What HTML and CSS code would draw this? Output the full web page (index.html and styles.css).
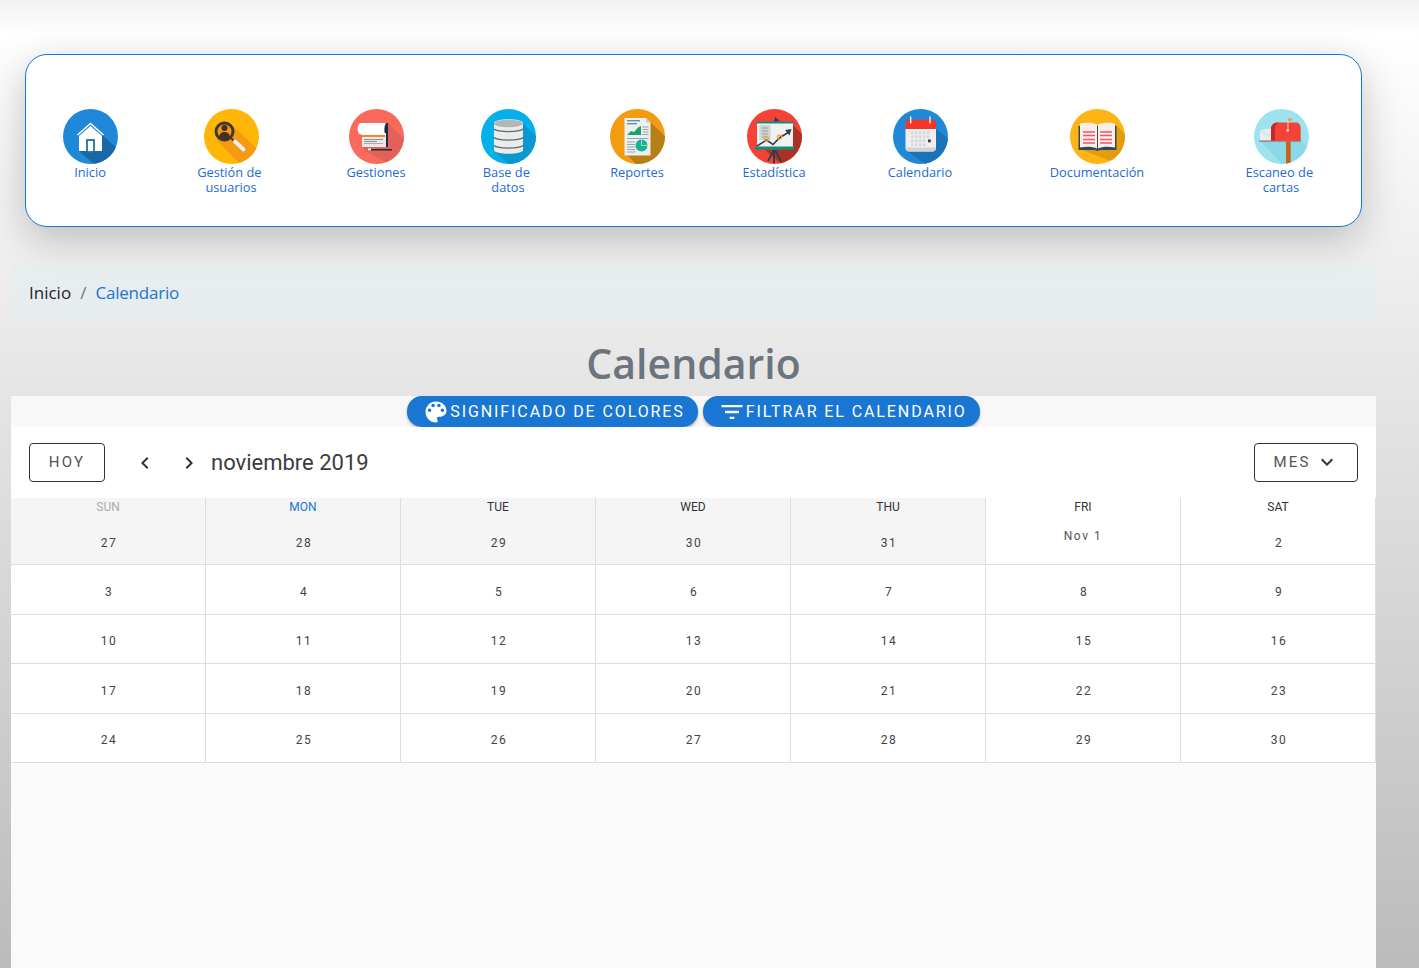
FILE: index.html
```html
<!DOCTYPE html>
<html lang="es">
  <head>
    <meta charset="UTF-8" />
    <title>Calendario</title>
    <link rel="stylesheet" href="styles.css">
  </head>
  <body>
    <nav class="nav-card">
      <a class="nav-item" href="#">
        <svg class="nav-icon" viewBox="0 0 55 55">
          <rect width="55" height="55" fill="#1f88d8"/>
          <polygon points="39,26 55,40 55,55 31,55 16,42 39,42" fill="#1a67a3"/>
          <polyline points="14.5,26 27.5,14.5 40.5,26" fill="none" stroke="#fff" stroke-width="1.6"/>
          <polygon points="16,27 27.5,17 39,27 39,42 16,42" fill="#fff"/>
          <rect x="24" y="31" width="7" height="12" fill="#fff" stroke="#1f6fae" stroke-width="1.8"/>
        </svg>
        <span>Inicio</span>
      </a>
      <a class="nav-item" href="#">
        <svg class="nav-icon" viewBox="0 0 55 55">
          <rect width="55" height="55" fill="#ffb606"/>
          <polygon points="27,15 55,42 55,55 36,55 13,31" fill="#f59b0f"/>
          <circle cx="20.5" cy="22.5" r="8.5" fill="#f59a14" stroke="#3c3a36" stroke-width="3"/>
          <circle cx="20.5" cy="19" r="3" fill="#4a2d1c"/>
          <path d="M15 28.5c.5-4 2.5-5.5 5.500-5.500s5 1.500 5.500 5.500c-3 2-8 2-11 0z" fill="#4a2d1c"/>
          <line x1="27" y1="29" x2="30" y2="32" stroke="#3c3a36" stroke-width="2"/>
          <line x1="31" y1="32.500" x2="39.500" y2="40.500" stroke="#eceff1" stroke-width="3.800" stroke-linecap="round"/>
        </svg>
        <span>Gestión de&nbsp;<br>usuarios</span>
      </a>
      <a class="nav-item" href="#">
        <svg class="nav-icon" viewBox="0 0 55 55">
          <rect width="55" height="55" fill="#fa6a5c"/>
          <polygon points="39,14 55,30 55,55 40,55 15,41 13,36" fill="#e2625a"/>
          <path d="M35 14h4v24h-4c-1-1-1-3 0-4z" fill="#1f2c3f"/>
          <rect x="13" y="24" width="24" height="14" fill="#e8e8e6"/>
          <rect x="13" y="26" width="23" height="2" fill="#ee8a3a"/>
          <rect x="15" y="30" width="19" height="1" fill="#8d939b"/>
          <rect x="15" y="32" width="13" height="1" fill="#8d939b"/>
          <rect x="15" y="34" width="19" height="1" fill="#a8adb3"/>
          <path d="M12 14h25c-2 3-2 8-1 11.500H12c-4.500 0-4.500-11.500 0-11.500z" fill="#fff"/>
          <rect x="19" y="40" width="24" height="1.500" fill="#1f2c3f"/>
          <rect x="19" y="39.500" width="3" height="2" fill="#f4f4f4"/>
        </svg>
        <span>Gestiones</span>
      </a>
      <a class="nav-item" href="#">
        <svg class="nav-icon" viewBox="0 0 55 55">
          <rect width="55" height="55" fill="#04b0ea"/>
          <polygon points="40,12 55,27 55,55 28,55 13,42" fill="#0b97cf"/>
          <path d="M13 14c0-5 29-5 29 0v27c0 5-29 5-29 0z" fill="#e9ece9"/>
          <ellipse cx="27.500" cy="14.500" rx="14.500" ry="3.800" fill="#b3b7b8"/>
          <path d="M13 20c4 3.500 25 3.500 29 0M13 28.500c4 3.500 25 3.500 29 0M13 36.500c4 3.500 25 3.500 29 0" fill="none" stroke="#5d6877" stroke-width="1.200"/>
        </svg>
        <span>Base de&nbsp;<br>datos</span>
      </a>
      <a class="nav-item" href="#">
        <svg class="nav-icon" viewBox="0 0 55 55">
          <rect width="55" height="55" fill="#f39c12"/>
          <polygon points="36,9 55,27 55,55 26,55 14,43" fill="#b97f17"/>
          <polygon points="14.500,9 36,9 40.500,13.500 40.500,46.500 14.500,46.500" fill="#ecf0f1"/>
          <polygon points="36,9 40.500,13.500 36,13.500" fill="#c5cccf"/>
          <rect x="17" y="11" width="13" height="1.400" fill="#5b93ad"/>
          <rect x="17" y="14" width="10" height="1.400" fill="#5b93ad"/>
          <polygon points="17,26 21,22 24,23 28,18.500 31,17 31,26" fill="#21a06f"/>
          <path d="M32.500 18h6M32.500 20.500h6M32.500 23h6M32.500 25.500h6M17 29.500h21.500" stroke="#96a6ad" stroke-width="1"/>
          <path d="M17 33h8M17 35.500h8M17 38h8M17 40.500h8M17 43h8" stroke="#96a6ad" stroke-width="1.200"/>
          <circle cx="31.500" cy="36.500" r="6" fill="#19b393"/>
          <path d="M31.500 30.500v6h6" fill="none" stroke="#ecf0f1" stroke-width=".6"/>
        </svg>
        <span>Reportes</span>
      </a>
      <a class="nav-item" href="#">
        <svg class="nav-icon" viewBox="0 0 55 55">
          <rect width="55" height="55" fill="#f44336"/>
          <polygon points="44,14 55,25 55,55 34,55 18,41 44,38" fill="#ab3125"/>
          <polygon points="27,13 28,8 33,12" fill="#2c3e50"/>
          <path d="M27 41l-6 11M27 41v13M28 41l6 11" stroke="#2c3e50" stroke-width="1.800"/>
          <rect x="10" y="13" width="36" height="25" fill="#eef3f1"/>
          <rect x="9.500" y="12.500" width="37" height="2" fill="#1a8a78"/>
          <rect x="8" y="37.500" width="39" height="3.200" fill="#1a8a78"/>
          <rect x="12.500" y="16" width="11" height="15" fill="#cfd4d4"/>
          <path d="M15 19h6M15 22h6M15 25h6M15 28h6" stroke="#8d979b" stroke-width=".9"/>
          <polyline points="10,37 19.500,31 26,35.500 33,28.500 42,23" fill="none" stroke="#2c3e50" stroke-width="1.600"/>
          <polygon points="38,21 44.500,20 42.500,26.500" fill="#2c3e50"/>
          <circle cx="19.500" cy="30" r="2.200" fill="none" stroke="#f0a63c" stroke-width="1.200"/>
          <circle cx="32.500" cy="28" r="2.200" fill="none" stroke="#f0a63c" stroke-width="1.200"/>
        </svg>
        <span>Estadística</span>
      </a>
      <a class="nav-item" href="#">
        <svg class="nav-icon" viewBox="0 0 55 55">
          <rect width="55" height="55" fill="#1f88d8"/>
          <polygon points="43,20 55,30 55,55 32,55 14,42" fill="#1a72b9"/>
          <path d="M12.500 20h30.500v19c0 2-1.500 3.500-3.500 3.500H16c-2 0-3.500-1.500-3.500-3.500z" fill="#eeeeee"/>
          <path d="M12.500 39c0 2 1.500 3.500 3.500 3.500h23.500c2 0 3.500-1.500 3.500-3.500v-.5h-30.500z" fill="#d3d3d3"/>
          <path d="M12.500 20v-6c0-2 1.500-3.500 3.500-3.500h23.500c2 0 3.500 1.500 3.500 3.500v6z" fill="#f4362a"/>
          <path d="M17.700 8v6M37 8v6" stroke="#f3f3f3" stroke-width="1.400" stroke-linecap="round"/>
          <g fill="#d5d5d5">
            <rect x="18" y="22.500" width="2.500" height="2.500"/><rect x="22" y="22.500" width="2.500" height="2.500"/><rect x="26" y="22.500" width="2.500" height="2.500"/><rect x="30" y="22.500" width="2.500" height="2.500"/><rect x="34" y="22.500" width="2.500" height="2.500"/>
            <rect x="18" y="26.500" width="2.500" height="2.500"/><rect x="22" y="26.500" width="2.500" height="2.500"/><rect x="26" y="26.500" width="2.500" height="2.500"/><rect x="30" y="26.500" width="2.500" height="2.500"/><rect x="34" y="26.500" width="2.500" height="2.500"/>
            <rect x="18" y="30.500" width="2.500" height="2.500"/><rect x="22" y="30.500" width="2.500" height="2.500"/><rect x="26" y="30.500" width="2.500" height="2.500"/><rect x="30" y="30.500" width="2.500" height="2.500"/>
            <rect x="18" y="34.500" width="2.500" height="2.500"/><rect x="22" y="34.500" width="2.500" height="2.500"/><rect x="26" y="34.500" width="2.500" height="2.500"/><rect x="30" y="34.500" width="2.500" height="2.500"/>
          </g>
          <rect x="35" y="30.500" width="2.800" height="2.800" fill="#3a3a3a"/>
        </svg>
        <span>Calendario</span>
      </a>
      <a class="nav-item" href="#">
        <svg class="nav-icon" viewBox="0 0 55 55">
          <rect width="55" height="55" fill="#fdb515"/>
          <polygon points="46,16 55,25 55,46 48,55 38,51 10,40" fill="#e59b10"/>
          <path d="M8.500 17h38v24H30l-2.500 1-2.500-1H8.500z" fill="#2b4a5c"/>
          <path d="M10 14.500c6-1.500 13-1 17 1v24c-4-2-11-2-17-1z" fill="#fbeee8"/>
          <path d="M45 14.500c-6-1.500-13-1-17 1v24c4-2 11-2 17-1z" fill="#fbeee8"/>
          <path d="M13 23h12M13 26.500h12M13 30.500h12M13 34h12M30 23h12M30 26.500h12M30 30.500h12M30 34h12" stroke="#f0566a" stroke-width="1.700"/>
        </svg>
        <span>Documentación</span>
      </a>
      <a class="nav-item" href="#">
        <svg class="nav-icon" viewBox="0 0 55 55">
          <rect width="55" height="55" fill="#9de3ee"/>
          <polygon points="5,31 47,31 55,39 55,55 28,55" fill="#8bd8e6"/>
          <rect x="32" y="32" width="4.700" height="23" fill="#c9611c"/>
          <polygon points="6,21 21,19 23.500,31.500 6,31.500" fill="#e9edf0"/>
          <path d="M6 21l9 6 7-7" fill="none" stroke="#c4ccd1" stroke-width=".8"/>
          <path d="M17 32V20c0-4 3-6.500 7-6.500h18c3 0 4.700 2.500 4.700 6v12.500z" fill="#f44336"/>
          <path d="M17 32V20c0-4 3-6.500 7-6.500h2c-3 0-5 2.500-5 6.500v12z" fill="#c62828"/>
          <rect x="5" y="31.500" width="41.700" height="1.200" fill="#b56a66"/>
          <path d="M34 22V9.500" stroke="#f6d6b0" stroke-width=".9"/>
          <rect x="34" y="9.500" width="4" height="2.300" fill="#ee9a4a"/>
          <circle cx="33.700" cy="21.500" r="1.200" fill="#ffe9d8"/>
        </svg>
        <span>Escaneo de&nbsp;<br>cartas</span>
      </a>
    </nav>

    <main class="page">
      <div class="breadcrumb">
        <a href="#" class="crumb-home">Inicio</a>
        <span class="crumb-sep">/</span>
        <a href="#" class="crumb-current">Calendario</a>
      </div>

      <h1 class="page-title">Calendario</h1>

      <div class="legend-bar">
        <button class="pill-btn">
          <svg viewBox="0 0 24 24" class="pill-icon"><path d="M12 3c-4.970 0-9 4.030-9 9s4.030 9 9 9c.83 0 1.500-.67 1.500-1.500 0-.39-.15-.74-.39-1.010-.23-.26-.38-.61-.38-.99 0-.83.67-1.500 1.500-1.500H16c2.760 0 5-2.240 5-5 0-4.420-4.030-8-9-8zm-5.500 9c-.83 0-1.500-.67-1.500-1.500S5.670 9 6.500 9 8 9.670 8 10.500 7.330 12 6.500 12zm3-4C8.670 8 8 7.330 8 6.500S8.670 5 9.500 5s1.500.67 1.500 1.500S10.330 8 9.500 8zm5 0c-.83 0-1.500-.67-1.500-1.500S13.670 5 14.500 5s1.500.67 1.500 1.500S15.330 8 14.500 8zm3 4c-.83 0-1.500-.67-1.500-1.500S16.670 9 17.500 9s1.500.67 1.500 1.500-.67 1.500-1.500 1.500z"/></svg>
          Significado de colores
        </button>
        <button class="pill-btn">
          <svg viewBox="0 0 24 24" class="pill-icon"><path d="M10 18h4v-2h-4v2zM3 6v2h18V6H3zm3 7h12v-2H6v2z"/></svg>
          Filtrar el calendario
        </button>
      </div>

      <div class="toolbar">
        <button class="outline-btn today-btn">Hoy</button>
        <button class="arrow-btn" aria-label="Anterior"><svg viewBox="0 0 24 24"><path d="M15.410 7.410L14 6l-6 6 6 6 1.410-1.410L10.830 12z"/></svg></button>
        <button class="arrow-btn" aria-label="Siguiente"><svg viewBox="0 0 24 24"><path d="M10 6L8.590 7.410 13.170 12l-4.580 4.590L10 18l6-6z"/></svg></button>
        <span class="month-label">noviembre 2019</span>
        <button class="outline-btn month-btn">Mes <svg viewBox="0 0 24 24"><path d="M16.590 8.590L12 13.170 7.410 8.590 6 10l6 6 6-6z"/></svg></button>
      </div>

      <div class="calendar">
        <div class="day first-row outside"><span class="weekday muted">SUN</span><span class="date">27</span></div>
        <div class="day first-row outside"><span class="weekday today">MON</span><span class="date">28</span></div>
        <div class="day first-row outside"><span class="weekday">TUE</span><span class="date">29</span></div>
        <div class="day first-row outside"><span class="weekday">WED</span><span class="date">30</span></div>
        <div class="day first-row outside"><span class="weekday">THU</span><span class="date">31</span></div>
        <div class="day first-row"><span class="weekday">FRI</span><span class="date month-start">Nov 1</span></div>
        <div class="day first-row"><span class="weekday">SAT</span><span class="date">2</span></div>

        <div class="day"><span class="date">3</span></div>
        <div class="day"><span class="date">4</span></div>
        <div class="day"><span class="date">5</span></div>
        <div class="day"><span class="date">6</span></div>
        <div class="day"><span class="date">7</span></div>
        <div class="day"><span class="date">8</span></div>
        <div class="day"><span class="date">9</span></div>

        <div class="day"><span class="date">10</span></div>
        <div class="day"><span class="date">11</span></div>
        <div class="day"><span class="date">12</span></div>
        <div class="day"><span class="date">13</span></div>
        <div class="day"><span class="date">14</span></div>
        <div class="day"><span class="date">15</span></div>
        <div class="day"><span class="date">16</span></div>

        <div class="day"><span class="date">17</span></div>
        <div class="day"><span class="date">18</span></div>
        <div class="day"><span class="date">19</span></div>
        <div class="day"><span class="date">20</span></div>
        <div class="day"><span class="date">21</span></div>
        <div class="day"><span class="date">22</span></div>
        <div class="day"><span class="date">23</span></div>

        <div class="day"><span class="date">24</span></div>
        <div class="day"><span class="date">25</span></div>
        <div class="day"><span class="date">26</span></div>
        <div class="day"><span class="date">27</span></div>
        <div class="day"><span class="date">28</span></div>
        <div class="day"><span class="date">29</span></div>
        <div class="day"><span class="date">30</span></div>
      </div>

      <div class="calendar-rest"></div>
    </main>
  </body>
</html>
```

FILE: styles.css
```css
html,
body {
  height: 100%;
}
body {
  margin: 0;
  height: 968px;
  overflow: hidden;
  display: flex;
  flex-direction: column;
  font-family: "Open Sans", sans-serif;
  background: linear-gradient(180deg, #f1f1f1 0, #ffffff 34px, #bbbbbb 968px);
}
.nav-card {
  box-sizing: border-box;
  display: grid;
  grid-template-columns: 100px 182px 108px 156px 102px 172px 120px 234px 134px;
  align-items: start;
  width: 1337px;
  height: 173px;
  margin: 54px 0 0 25px;
  padding: 54px 0 0 14px;
  background: #fff;
  border: 1px solid #1976d2;
  border-radius: 22px;
  box-shadow: 0 12px 40px rgba(0, 0, 0, 0.22);
}
.nav-item {
  display: flex;
  flex-direction: column;
  align-items: center;
  text-align: center;
  text-decoration: none;
  color: #1a6bd6;
  font-size: 12.8px;
  font-weight: 500;
  line-height: 15px;
}
.nav-icon {
  display: block;
  width: 55px;
  height: 55px;
  border-radius: 50%;
  margin-bottom: 1px;
}
.page {
  flex: 1;
  display: flex;
  flex-direction: column;
  width: 1365px;
  margin: 39px 0 0 11px;
}
.breadcrumb {
  display: flex;
  align-items: center;
  gap: 9px;
  height: 53px;
  padding: 0 18px;
  font-size: 17px;
  background: rgba(228, 236, 242, 0.6);
}
.crumb-home {
  color: #212529;
  text-decoration: none;
}
.crumb-sep {
  color: #6c757d;
}
.crumb-current {
  color: #1976d2;
  text-decoration: none;
  letter-spacing: -0.2px;
}
.page-title {
  margin: 0;
  height: 77px;
  line-height: 89px;
  text-align: center;
  font-size: 41px;
  font-weight: 600;
  color: #6c757d;
}
.legend-bar {
  display: flex;
  justify-content: center;
  gap: 5px;
  height: 31px;
  background: #f8f8f8;
}
.pill-btn {
  display: flex;
  align-items: center;
  height: 31px;
  padding: 0 13px 0 15px;
  border: none;
  border-radius: 15px;
  background: #1976d2;
  color: #fff;
  font-family: Roboto, sans-serif;
  font-size: 16px;
  font-weight: 400;
  letter-spacing: 1.9px;
  text-transform: uppercase;
  box-shadow: 0 2px 3px rgba(0, 0, 0, 0.25);
}
.pill-icon {
  width: 28px;
  height: 28px;
  fill: #fff;
}
.toolbar {
  display: flex;
  align-items: center;
  height: 71px;
  padding: 0 18px;
  background: #fff;
}
.outline-btn {
  display: flex;
  align-items: center;
  justify-content: center;
  height: 39px;
  box-sizing: border-box;
  padding-bottom: 2px;
  background: #fff;
  border: 1px solid #333;
  border-radius: 4px;
  font-family: Roboto, sans-serif;
  font-size: 15px;
  letter-spacing: 2.2px;
  text-transform: uppercase;
  color: #555;
}
.today-btn {
  width: 76px;
  margin-right: 18px;
}
.month-btn {
  width: 104px;
  margin-left: auto;
  gap: 4px;
}
.month-btn svg {
  width: 24px;
  height: 24px;
  fill: #333;
}
.arrow-btn {
  display: flex;
  align-items: center;
  justify-content: center;
  width: 44px;
  height: 44px;
  padding: 0;
  background: none;
  border: none;
}
.arrow-btn svg {
  width: 24px;
  height: 24px;
  fill: #333;
}
.month-label {
  font-family: Roboto, sans-serif;
  font-size: 22px;
  color: #3c3c3c;
}
.calendar {
  display: grid;
  grid-template-columns: repeat(7, 195px);
  grid-template-rows: 67px 50px 49px 50px 49px;
  background: #fff;
  font-family: Roboto, sans-serif;
  color: #333;
}
.day {
  box-sizing: border-box;
  display: flex;
  flex-direction: column;
  align-items: center;
  justify-content: center;
  padding-top: 5px;
  border-right: 1px solid #dedede;
  border-bottom: 1px solid #dedede;
}
.first-row {
  justify-content: flex-start;
  padding-top: 2px;
}
.outside {
  background: #f5f5f5;
}
.weekday {
  font-size: 12px;
  line-height: 15px;
  color: #333;
}
.weekday.muted {
  color: #aaa;
}
.weekday.today {
  color: #1976d2;
}
.date {
  padding-left: 2px;
  font-size: 12px;
  line-height: 15px;
  letter-spacing: 1.5px;
  color: #444;
}
.first-row .date {
  margin-top: 21px;
}
.first-row .month-start {
  margin-top: 14px;
  padding-left: 0;
  color: #555;
}
.calendar-rest {
  flex: 1;
  background: #fafafa;
}
```
